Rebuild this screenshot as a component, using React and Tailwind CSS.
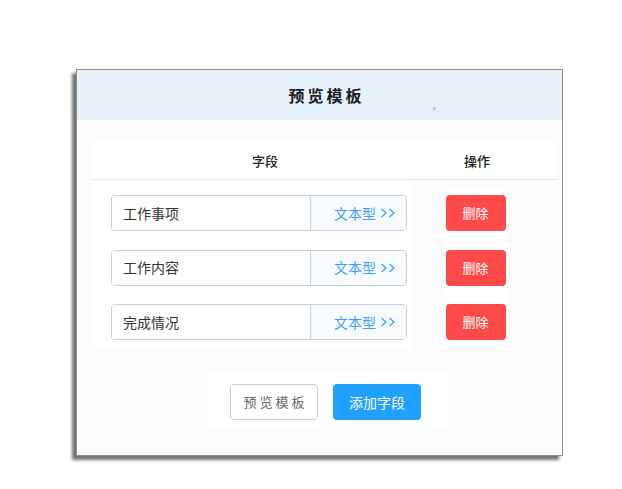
import React from 'react';

const fields = ['工作事项', '工作内容', '完成情况'];

function Chevrons() {
    return (
        <svg width="16" height="10" viewBox="0 0 16 10" fill="none" stroke="#409eff" strokeWidth="1.3">
            <path d="M1.5 1 L6 5 L1.5 9" />
            <path d="M9.5 1 L14 5 L9.5 9" />
        </svg>
    );
}

export default function App() {
    return (
        <div className="min-h-[489px] w-[622px] bg-white pt-[69px] pl-[76px]" style={{ fontFamily: '"Noto Sans CJK SC", "Noto Sans", sans-serif' }}>
            <div className="relative w-[487px] h-[387px] border-[1.5px] border-[#8f8f8f] bg-[#fcfcfc] shadow-[-4px_4px_3px_rgba(0,0,0,0.55)]">
                {/* Header */}
                <div className="h-[50px] bg-[#e7f1f9] flex items-center justify-center pl-[14px]">
                    <span className="text-[16px] font-bold tracking-[3px] text-[#1f1f1f]">预览模板</span>
                </div>
                <span className="absolute left-[356px] top-[37px] w-[3px] h-[3px] rounded-full bg-[#b8c0c8]"></span>

                {/* Body */}
                <div className="pt-[22px] pl-[13px] pr-[5px]">
                    <div className="h-[38px] bg-white border-b border-[#e3e6ea] flex items-center text-[13px] font-medium text-[#222]">
                        <div className="w-[350px] text-center">字段</div>
                        <div className="w-[74px] text-center">操作</div>
                    </div>

                    <div className="flex">
                        <div className="w-[323px] bg-white pt-[15px] pb-[10px] pl-[21px] flex flex-col gap-[18.5px]">
                            {fields.map(f => (
                                <div key={f} className="w-[296px] h-[36px] border border-[#c2d0df] rounded-[4px] flex overflow-hidden">
                                    <div className="w-[198px] flex items-center px-[11px] text-[14px] text-[#333] bg-white">{f}</div>
                                    <div className="flex-1 flex items-center justify-end gap-[4px] pr-[10px] border-l border-[#c2d0df] bg-[#f8fbfe] text-[14px] text-[#409eff]">
                                        文本型 <Chevrons />
                                    </div>
                                </div>
                            ))}
                        </div>
                        <div className="ml-[29px] mt-[10px] mb-[2px] w-[67px] bg-white pt-[5px] flex flex-col items-center gap-[18.5px]">
                            {fields.map(f => (
                                <button key={f} className="w-[60px] h-[36px] rounded-[4px] bg-[#ff4a4a] text-white text-[13px]">删除</button>
                            ))}
                        </div>
                    </div>

                    {/* Footer */}
                    <div className="mt-[24px] ml-[118px] w-[241px] h-[56px] bg-white flex items-center pl-[22px] gap-[15px]">
                        <button className="w-[88px] h-[36px] border border-[#c2d0df] rounded-[4px] text-[13px] tracking-[3px] text-[#666] pl-[3px]">预览模板</button>
                        <button className="w-[88px] h-[36px] rounded-[4px] bg-[#20a0ff] text-white text-[14px]">添加字段</button>
                    </div>
                </div>
            </div>
        </div>
    );
}
